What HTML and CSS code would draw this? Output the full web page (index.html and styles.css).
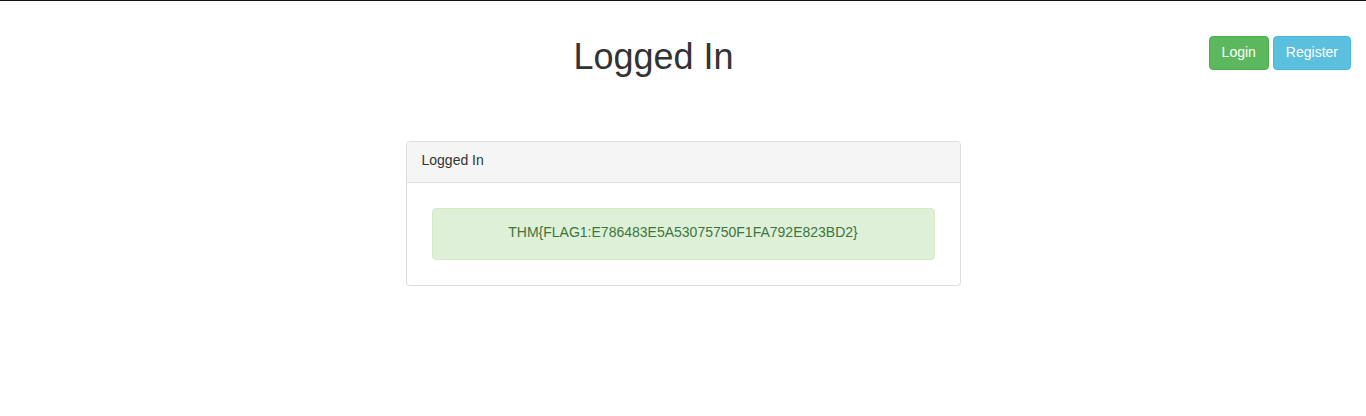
FILE: index.html
```html
<!DOCTYPE html>
<html>
<head>
<meta charset="utf-8">
<title>Logged In</title>
<link rel="stylesheet" href="styles.css">
</head>
<body>
<div class="page">
  <header class="header">
    <h1 class="title">Logged In</h1>
    <div class="actions">
      <a class="btn btn-success" href="#">Login</a>
      <a class="btn btn-info" href="#">Register</a>
    </div>
  </header>
  <main class="content">
    <div class="panel">
      <div class="panel-heading">Logged In</div>
      <div class="panel-body">
        <div class="inner">
          <div class="alert">THM{FLAG1:E786483E5A53075750F1FA792E823BD2}</div>
        </div>
      </div>
    </div>
  </main>
</div>
</body>
</html>
```
FILE: styles.css
```css
html, body {
  margin: 0;
  padding: 0;
  background: #fff;
}
body {
  position: relative;
  font-family: "Liberation Sans", Arial, sans-serif;
  font-size: 14px;
  line-height: 20px;
  color: #333;
  border-top: 1px solid #111;
}
.header {
  padding-right: 59px;
}
.title {
  margin: 36px 0 0;
  font-size: 36px;
  line-height: 40px;
  font-weight: 500;
  text-align: center;
  color: #333;
}
.actions {
  position: absolute;
  top: 35px;
  right: 15px;
  display: flex;
  gap: 4px;
}
.btn {
  display: inline-block;
  padding: 5px 12px 7px;
  font-size: 14px;
  line-height: 20px;
  color: #fff;
  text-decoration: none;
  border: 1px solid transparent;
  border-radius: 4px;
}
.btn-success {
  background: #5cb85c;
  border-color: #4cae4c;
}
.btn-info {
  background: #5bc0de;
  border-color: #46b8da;
}
.content {
  display: flex;
  justify-content: center;
  margin-top: 64px;
}
.panel {
  width: 553px;
  border: 1px solid #ddd;
  border-radius: 4px;
  box-shadow: 0 1px 1px rgba(0,0,0,.05);
  background: #fff;
}
.panel-heading {
  padding: 8px 15px 12px;
  background: #f5f5f5;
  border-bottom: 1px solid #ddd;
  border-radius: 3px 3px 0 0;
  color: #333;
}
.panel-body {
  padding: 15px;
}
.inner {
  padding: 10px;
}
.alert {
  padding: 13px 15px 17px;
  border: 1px solid #d6e9c6;
  border-radius: 4px;
  background: #dff0d8;
  color: #3c763d;
  text-align: center;
}
```
